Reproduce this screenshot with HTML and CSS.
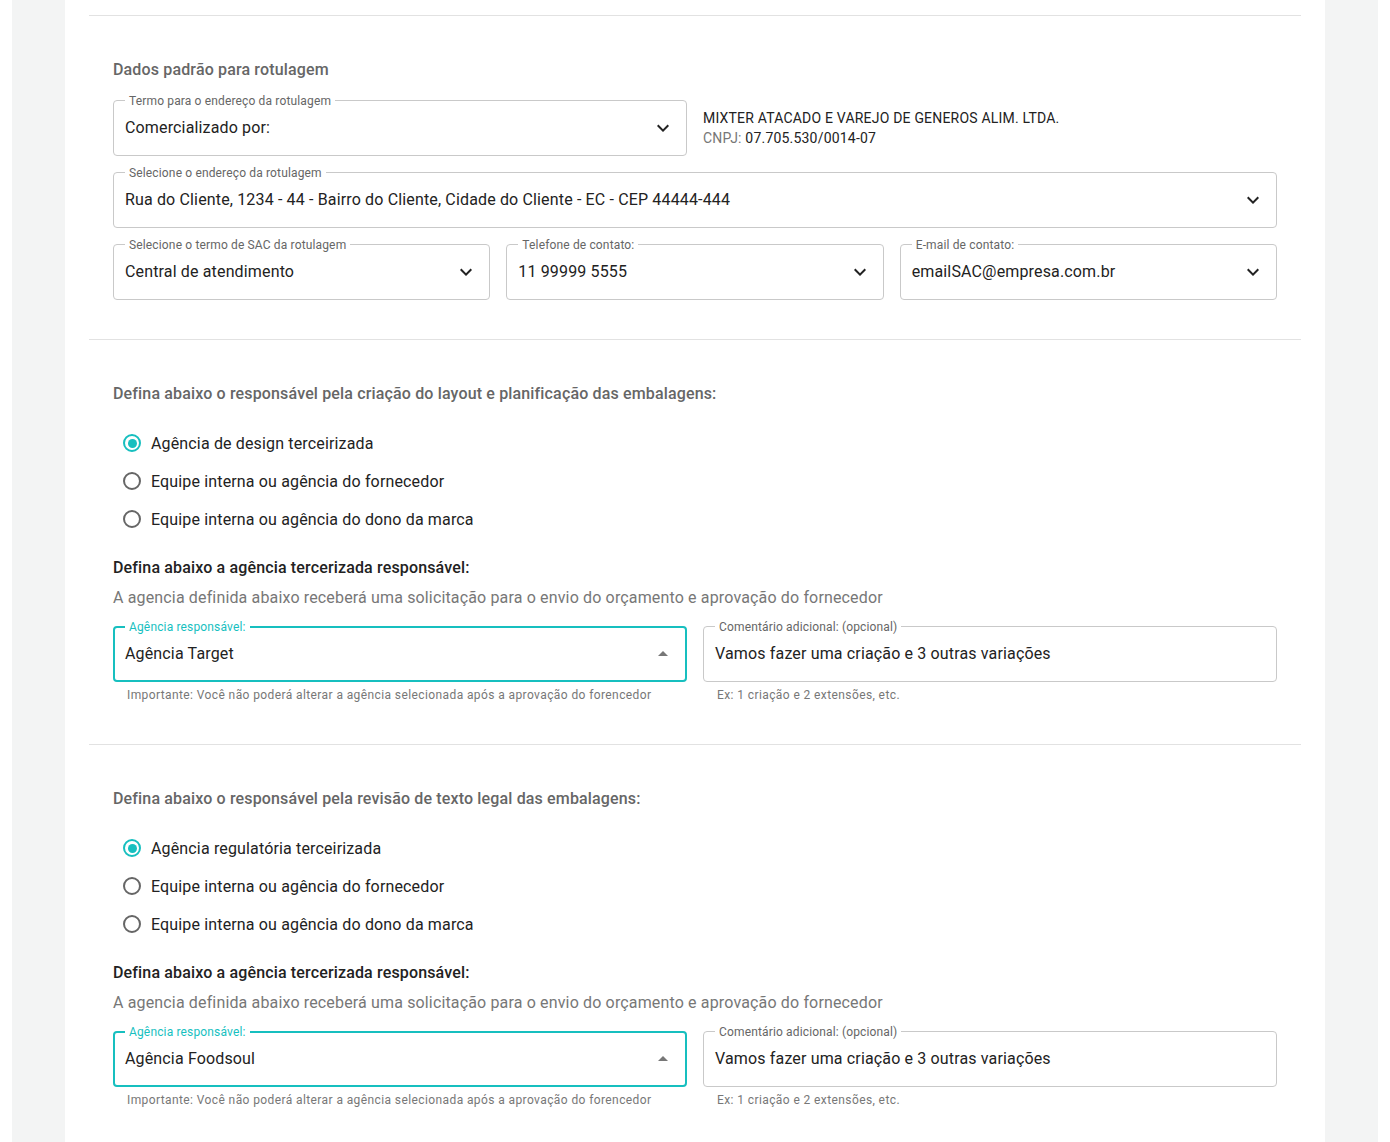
FILE: index.html
```html
<!DOCTYPE html>
<html lang="pt-BR">
<head>
    <meta charset="UTF-8">
    <title>Dados de rotulagem</title>
    <link rel="stylesheet" href="styles.css">
</head>
<body>
<div class="page">
    <div class="card">

        <!-- Dados padrão -->
        <section class="section">
            <h2 class="section-title">Dados padrão para rotulagem</h2>

            <div class="row two">
                <div class="field">
                    <span class="field-label">Termo para o endereço da rotulagem</span>
                    <span class="field-value">Comercializado por:</span>
                    <svg class="chevron" viewBox="0 0 24 24"><path d="M16.59 8.59L12 13.17 7.41 8.59 6 10l6 6 6-6z"/></svg>
                </div>
                <div class="company">
                    <div class="company-name">MIXTER ATACADO E VAREJO DE GENEROS ALIM. LTDA.</div>
                    <div class="company-doc"><span class="muted">CNPJ:</span> 07.705.530/0014-07</div>
                </div>
            </div>

            <div class="row">
                <div class="field">
                    <span class="field-label">Selecione o endereço da rotulagem</span>
                    <span class="field-value">Rua do Cliente, 1234 - 44 - Bairro do Cliente, Cidade do Cliente - EC - CEP 44444-444</span>
                    <svg class="chevron" viewBox="0 0 24 24"><path d="M16.59 8.59L12 13.17 7.41 8.59 6 10l6 6 6-6z"/></svg>
                </div>
            </div>

            <div class="row three">
                <div class="field">
                    <span class="field-label">Selecione o termo de SAC da rotulagem</span>
                    <span class="field-value">Central de atendimento</span>
                    <svg class="chevron" viewBox="0 0 24 24"><path d="M16.59 8.59L12 13.17 7.41 8.59 6 10l6 6 6-6z"/></svg>
                </div>
                <div class="field">
                    <span class="field-label">Telefone de contato:</span>
                    <span class="field-value">11 99999 5555</span>
                    <svg class="chevron" viewBox="0 0 24 24"><path d="M16.59 8.59L12 13.17 7.41 8.59 6 10l6 6 6-6z"/></svg>
                </div>
                <div class="field">
                    <span class="field-label">E-mail de contato:</span>
                    <span class="field-value">emailSAC@empresa.com.br</span>
                    <svg class="chevron" viewBox="0 0 24 24"><path d="M16.59 8.59L12 13.17 7.41 8.59 6 10l6 6 6-6z"/></svg>
                </div>
            </div>
        </section>

        <!-- Layout -->
        <section class="section">
            <h2 class="section-title">Defina abaixo o responsável pela criação do layout e planificação das embalagens:</h2>

            <div class="radios">
                <label class="radio checked"><span class="radio-dot"></span>Agência de design terceirizada</label>
                <label class="radio"><span class="radio-dot"></span>Equipe interna ou agência do fornecedor</label>
                <label class="radio"><span class="radio-dot"></span>Equipe interna ou agência do dono da marca</label>
            </div>

            <h3 class="sub-title">Defina abaixo a agência tercerizada responsável:</h3>
            <p class="sub-text">A agencia definida abaixo receberá uma solicitação para o envio do orçamento e aprovação do fornecedor</p>

            <div class="row two agency-row">
                <div>
                    <div class="field focused">
                        <span class="field-label">Agência responsável:</span>
                        <span class="field-value">Agência Target</span>
                        <svg class="arrow-up" viewBox="0 0 24 24"><path d="M7 14l5-5 5 5z"/></svg>
                    </div>
                    <div class="helper">Importante: Você não poderá alterar a agência selecionada após a aprovação do forencedor</div>
                </div>
                <div>
                    <div class="field">
                        <span class="field-label">Comentário adicional: (opcional)</span>
                        <span class="field-value">Vamos fazer uma criação e 3 outras variações</span>
                    </div>
                    <div class="helper">Ex: 1 criação e 2 extensões, etc.</div>
                </div>
            </div>
        </section>

        <!-- Texto legal -->
        <section class="section">
            <h2 class="section-title">Defina abaixo o responsável pela revisão de texto legal das embalagens:</h2>

            <div class="radios">
                <label class="radio checked"><span class="radio-dot"></span>Agência regulatória terceirizada</label>
                <label class="radio"><span class="radio-dot"></span>Equipe interna ou agência do fornecedor</label>
                <label class="radio"><span class="radio-dot"></span>Equipe interna ou agência do dono da marca</label>
            </div>

            <h3 class="sub-title">Defina abaixo a agência tercerizada responsável:</h3>
            <p class="sub-text">A agencia definida abaixo receberá uma solicitação para o envio do orçamento e aprovação do fornecedor</p>

            <div class="row two agency-row">
                <div>
                    <div class="field focused">
                        <span class="field-label">Agência responsável:</span>
                        <span class="field-value">Agência Foodsoul</span>
                        <svg class="arrow-up" viewBox="0 0 24 24"><path d="M7 14l5-5 5 5z"/></svg>
                    </div>
                    <div class="helper">Importante: Você não poderá alterar a agência selecionada após a aprovação do forencedor</div>
                </div>
                <div>
                    <div class="field">
                        <span class="field-label">Comentário adicional: (opcional)</span>
                        <span class="field-value">Vamos fazer uma criação e 3 outras variações</span>
                    </div>
                    <div class="helper">Ex: 1 criação e 2 extensões, etc.</div>
                </div>
            </div>
        </section>

    </div>
</div>
</body>
</html>
```

FILE: styles.css
```css
body {
    margin: 0 12px;
    background: #fff;
    font-family: Roboto, "Liberation Sans", Arial, sans-serif;
    color: #222;
    letter-spacing: 0.15px;
}
.page {
    background: #f3f4f4;
    padding: 0 53px;
}
.card {
    background: #fff;
    padding: 15px 24px 40px;
}
.section {
    border-top: 1px solid #e2e2e2;
    padding: 42px 24px 41px;
}
.section:first-child {
    padding-bottom: 39px;
}
.section-title {
    margin: 0 0 18px;
    font-size: 16px;
    line-height: 24px;
    font-weight: 500;
    color: #666;
}
.row {
    display: grid;
    gap: 16px;
    margin-bottom: 16px;
}
.row:last-child {
    margin-bottom: 0;
}
.row.two {
    grid-template-columns: 1fr 1fr;
}
.row.three {
    grid-template-columns: 1fr 1fr 1fr;
}

/* outlined field */
.field {
    position: relative;
    box-sizing: border-box;
    height: 56px;
    border: 1px solid #c9c9c9;
    border-radius: 4px;
    padding: 0 11px 1px 11px;
    display: flex;
    align-items: center;
    justify-content: space-between;
}
.field.focused {
    border: 2px solid #17bfbf;
    padding: 0 10px 1px 10px;
}
.field-label {
    position: absolute;
    top: -8px;
    left: 11px;
    padding: 0 4px;
    background: #fff;
    font-size: 12px;
    line-height: 16px;
    color: #666;
    white-space: nowrap;
}
.field.focused .field-label {
    left: 10px;
    top: -9px;
    color: #17bfbf;
}
.field-value {
    font-size: 16px;
    color: #222;
    white-space: nowrap;
}
.chevron {
    width: 24px;
    height: 24px;
    fill: #222;
    flex: none;
}
.arrow-up {
    width: 24px;
    height: 24px;
    fill: #777;
    flex: none;
}
.company {
    display: flex;
    flex-direction: column;
    justify-content: center;
    font-size: 14px;
    line-height: 20px;
    letter-spacing: 0.2px;
    color: #222;
}
.muted {
    color: #777;
}

/* radios */
.radios {
    margin-top: 17px;
}
.radio {
    display: flex;
    align-items: center;
    height: 38px;
    padding-left: 10px;
    font-size: 16px;
    color: #222;
}
.radio-dot {
    box-sizing: border-box;
    width: 18px;
    height: 18px;
    border: 2px solid #666;
    border-radius: 50%;
    margin-right: 10px;
    display: flex;
    align-items: center;
    justify-content: center;
}
.radio.checked .radio-dot {
    border-color: #17bfbf;
}
.radio.checked .radio-dot::after {
    content: "";
    width: 9px;
    height: 9px;
    border-radius: 50%;
    background: #17bfbf;
}

.sub-title {
    margin: 18px 0 0;
    font-size: 16px;
    line-height: 24px;
    font-weight: 500;
    color: #222;
}
.sub-text {
    margin: 6px 0 0;
    font-size: 16px;
    line-height: 24px;
    color: #777;
}
.agency-row {
    margin-top: 16px;
}
.helper {
    margin: 5px 0 0 14px;
    font-size: 12px;
    line-height: 16px;
    letter-spacing: 0.4px;
    color: #777;
}
```
